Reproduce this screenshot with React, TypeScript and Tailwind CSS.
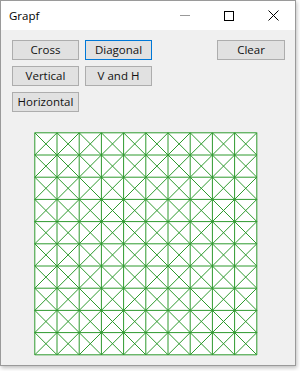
import React from "react";

const Btn = ({ label, w, focused }: { label: string; w: string; focused?: boolean }) => (
  <div
    className={`${w} h-[20px] flex items-center justify-center text-[11.5px] text-[#111] bg-[#e1e1e1] border ${
      focused ? "border-[#0078d7]" : "border-[#adadad]"
    }`}
  >
    {label}
  </div>
);

const Grid = () => {
  const n = 10;
  const s = 22.2;
  const o = 0.8;
  const lines: React.ReactNode[] = [];
  for (let i = 0; i <= n; i++) {
    const p = o + i * s;
    lines.push(<line key={`v${i}`} x1={p} y1={o} x2={p} y2={o + n * s} />);
    lines.push(<line key={`h${i}`} x1={o} y1={p} x2={o + n * s} y2={p} />);
  }
  for (let r = 0; r < n; r++) {
    for (let c = 0; c < n; c++) {
      const x = o + c * s;
      const y = o + r * s;
      lines.push(<line key={`a${r}-${c}`} x1={x} y1={y} x2={x + s} y2={y + s} />);
      lines.push(<line key={`b${r}-${c}`} x1={x + s} y1={y} x2={x} y2={y + s} />);
    }
  }
  return (
    <svg width="225" height="225" className="block">
      <rect x={o} y={o} width={n * s} height={n * s} fill="#ffffff" />
      <g stroke="#2e9a2e" strokeWidth="1" fill="none">
        {lines}
      </g>
    </svg>
  );
};

export default function App() {
  return (
    <div
      className="w-[300px] h-[371px] bg-white"
      style={{ fontFamily: '"Open Sans", "Noto Sans", sans-serif' }}
    >
      <div className="w-[296px] h-[366px] border border-[#9a9a9a] bg-[#f0f0f0] flex flex-col shadow-[1px_2px_4px_rgba(0,0,0,0.25)]">
        <div className="h-[29px] bg-white flex items-center shrink-0">
          <span className="ml-[8px] text-[11.5px] text-black">Grapf</span>
          <div className="ml-auto flex items-center h-full">
            <div className="w-[44px] h-full flex items-center justify-center">
              <div className="w-[10px] h-[1px] bg-[#999]" />
            </div>
            <div className="w-[44px] h-full flex items-center justify-center">
              <div className="w-[10px] h-[10px] border border-black" />
            </div>
            <div className="w-[44px] h-full flex items-center justify-center">
              <svg width="11" height="11" viewBox="0 0 11 11">
                <path d="M0.5 0.5 L10.5 10.5 M10.5 0.5 L0.5 10.5" stroke="#000" strokeWidth="1" />
              </svg>
            </div>
          </div>
        </div>
        <div className="flex flex-col pl-[11px] pr-[10px] pt-[10px]">
          <div className="flex">
            <div className="flex flex-col gap-[6px]">
              <div className="flex gap-[6px]">
                <Btn label="Cross" w="w-[67px]" />
                <Btn label="Diagonal" w="w-[67px]" focused />
              </div>
              <div className="flex gap-[6px]">
                <Btn label="Vertical" w="w-[67px]" />
                <Btn label="V and H" w="w-[67px]" />
              </div>
              <div className="flex gap-[6px]">
                <Btn label="Horizontal" w="w-[67px]" />
              </div>
            </div>
            <div className="ml-auto">
              <Btn label="Clear" w="w-[68px]" />
            </div>
          </div>
          <div className="mt-[20px] ml-[22px]">
            <Grid />
          </div>
        </div>
      </div>
    </div>
  );
}
